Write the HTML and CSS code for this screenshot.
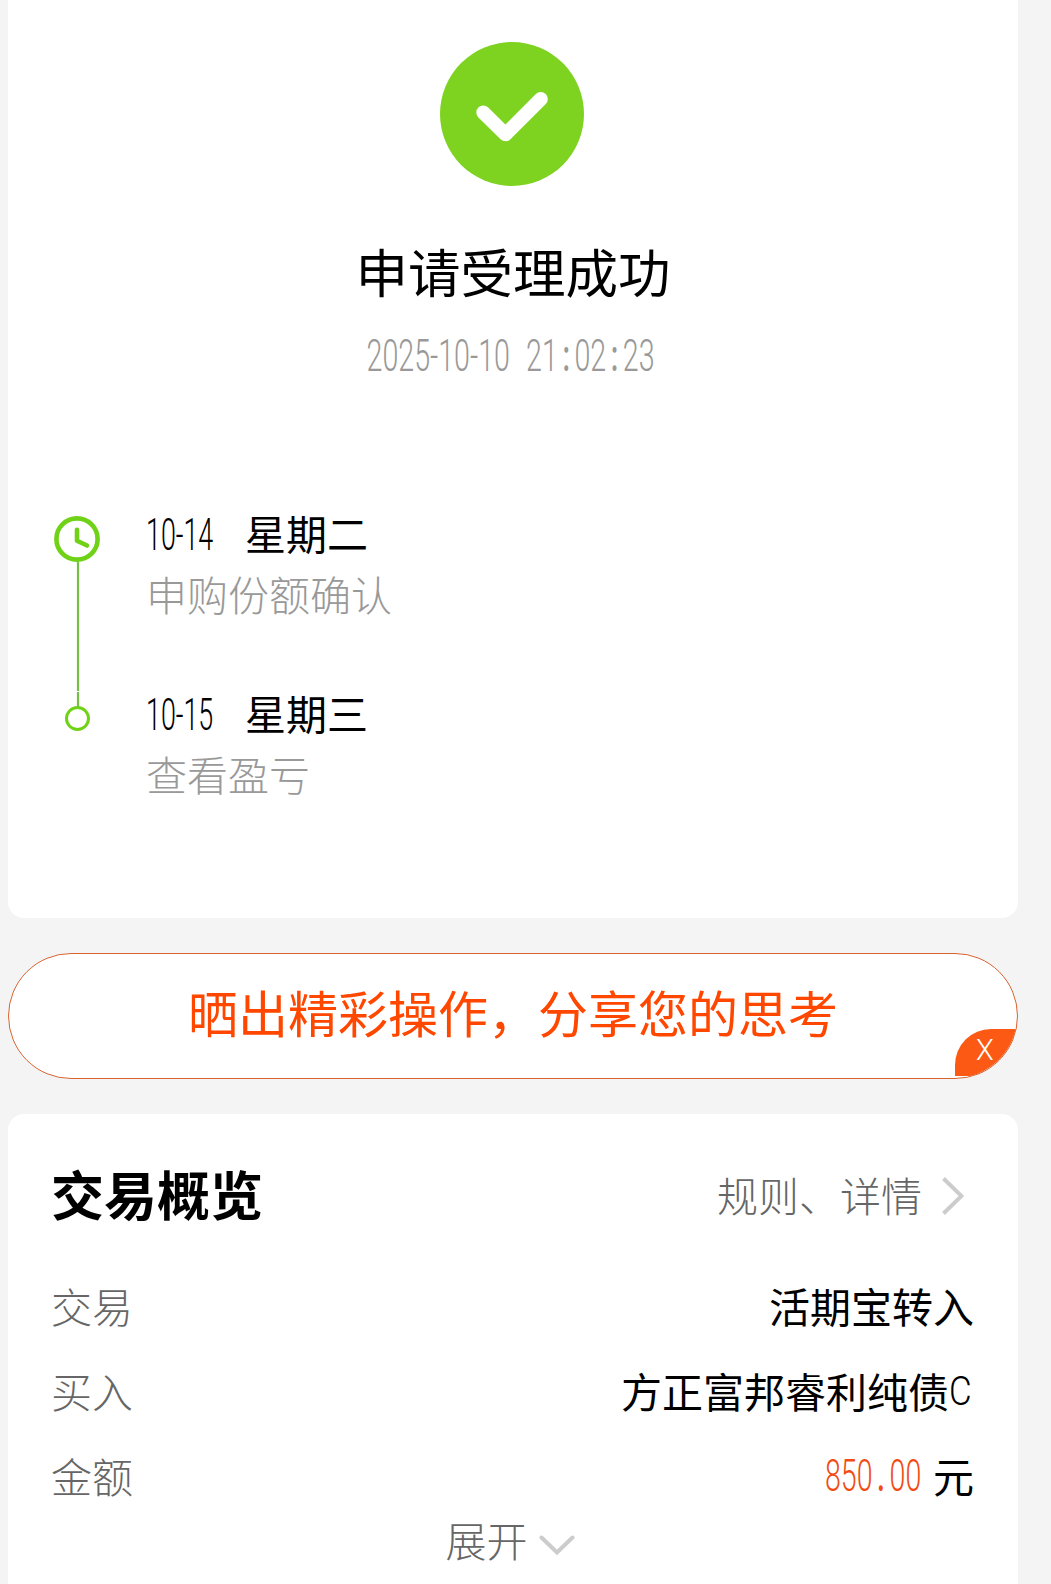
FILE: index.html
```html
<!DOCTYPE html>
<html lang="zh-CN">
<head>
  <meta charset="UTF-8">
  <meta name="viewport" content="width=device-width, initial-scale=1.0">
  <title>申请受理成功</title>
  <link rel="stylesheet" href="styles.css">
</head>
<body>
  <div class="card result">
    <svg class="result-icon" viewBox="0 0 144 144">
      <circle cx="72" cy="72" r="72" fill="#7ed321"/>
      <path d="M43.3 70.5 L65.5 92.3 L100.8 57" fill="none" stroke="#fff" stroke-width="14" stroke-linecap="round" stroke-linejoin="round"/>
    </svg>
    <h1>申请受理成功</h1>
    <p class="result-time"><span class="num">2025-10-10<span class="gap"></span>21<i>:</i>02<i>:</i>23</span></p>

    <div class="timeline">
      <svg class="track" viewBox="0 0 46 216">
        <g fill="none" stroke="#6fd216">
          <circle cx="23" cy="23" r="20.6" stroke-width="4.6"/>
          <path d="M23 13.8 V24.7 L33 29.5" stroke-width="4.6" stroke-linecap="round" stroke-linejoin="round"/>
          <circle cx="23.5" cy="202.5" r="11" stroke-width="3"/>
        </g>
        <path d="M24 46 V175 M24 176 V191" stroke="#73c044" stroke-width="2.2"/>
      </svg>
      <div class="steps">
        <div class="step">
          <div class="step-day"><span class="num">10-14</span><span>星期二</span></div>
          <div class="step-text">申购份额确认</div>
        </div>
        <div class="step">
          <div class="step-day"><span class="num">10-15</span><span>星期三</span></div>
          <div class="step-text">查看盈亏</div>
        </div>
      </div>
    </div>
  </div>

  <div class="share">
    <span>晒出精彩操作，分享您的思考</span>
    <div class="share-close"><span>X</span></div>
  </div>

  <div class="card overview">
    <div class="overview-head">
      <h2>交易概览</h2>
      <div class="link">
        <span>规则、详情</span>
        <svg width="22" height="38" viewBox="0 0 22 38"><path d="M1.5 1.5 L19.5 19 L1.5 36.5" fill="none" stroke="#ccc" stroke-width="4"/></svg>
      </div>
    </div>
    <div class="row"><span class="label">交易</span><span>活期宝转入</span></div>
    <div class="row"><span class="label">买入</span><span class="fund">方正富邦睿利纯债<b>C</b></span></div>
    <div class="row"><span class="label">金额</span><span class="money"><span class="num">850<i>.</i>00</span><span>元</span></span></div>
    <div class="expand">
      <span>展开</span>
      <svg width="36" height="22" viewBox="0 0 36 22"><path d="M2.5 2.5 L18 17.5 L33.5 2.5" fill="none" stroke="#ccc" stroke-width="4" stroke-linecap="round"/></svg>
    </div>
  </div>
</body>
</html>
```
FILE: styles.css
```css
* { box-sizing: border-box; margin: 0; padding: 0; }
body { width: 1051px; height: 1584px; overflow: hidden; padding: 0 33px 0 8px; background: #f4f4f4; color: #000; font-family: "Noto Sans CJK SC", sans-serif; font-weight: 300; font-size: 41px; }
svg { display: block; flex: none; }
.card { background: #fff; }

/* narrow digits */
.num { display: inline-block; font-family: Roboto, sans-serif; font-weight: 300; font-size: 44px; white-space: nowrap; transform: scaleX(0.65); }
.num i { font-style: normal; font-weight: 500; padding: 0 7px; }
.num .gap { display: inline-block; width: 25px; }

.result { height: 918px; padding-top: 42px; border-radius: 0 0 16px 16px; }
.result-icon { width: 144px; height: 144px; margin: 0 auto 0 432px; }
.result h1 { margin-top: 53px; font-size: 52.5px; line-height: 62px; font-weight: 400; text-align: center; }
.result-time { height: 50px; margin-top: 30px; line-height: 50px; color: #999; display: flex; justify-content: center; padding-right: 4px; }

.timeline { display: flex; margin-top: 135px; padding-left: 46px; }
.track { width: 46px; height: 216px; }
.steps { margin-left: 46px; margin-top: -14px; }
.step { height: 180px; line-height: 60px; }
.step-day { display: flex; height: 60px; font-weight: 400; }
.step-day .num { width: 99px; transform: scaleX(0.61); transform-origin: left; padding-top: 3px; }
.step-text { padding-top: 1px; color: #999; }

.share { position: relative; display: flex; justify-content: center; height: 126px; margin: 35px 0; border: 1.5px solid #d9622f; border-radius: 63px; background: #fff; overflow: hidden; color: #ff4700; font-size: 50px; line-height: 115px; font-weight: 400; }
.share-close { position: absolute; right: 0; bottom: 2px; width: 62px; height: 47px; border-radius: 36px 0 0 0; background: #fc5a14; color: #fff; font-family: Roboto, sans-serif; font-weight: 300; font-size: 29px; line-height: 43px; padding-left: 21px; }

.overview { height: 490px; padding: 43px 44px 0 43px; border-radius: 16px 16px 0 0; }
.overview-head { display: flex; justify-content: space-between; height: 76px; line-height: 72px; margin-bottom: 34px; }
.overview h2 { font-size: 53px; font-weight: 700; }
.link { display: flex; color: #666; padding-right: 10px; gap: 20px; line-height: 74px; }
.link svg { margin-top: 20px; }
.row { display: flex; justify-content: space-between; height: 85px; line-height: 76px; font-weight: 400; }
.label { color: #666; font-weight: 300; }
.fund { display: flex; }
.fund b { width: 25px; font-family: Roboto, sans-serif; font-weight: 300; transform: scaleX(0.85); transform-origin: left; padding-top: 1px; }
.money { display: flex; }
.money .num { color: #f04c14; margin-right: -14px; padding-top: 1px; }
.expand { display: flex; justify-content: center; height: 60px; margin-top: -13px; line-height: 60px; color: #666; gap: 11px; padding-right: 5px; }
.expand svg { margin-top: 26px; }
```
